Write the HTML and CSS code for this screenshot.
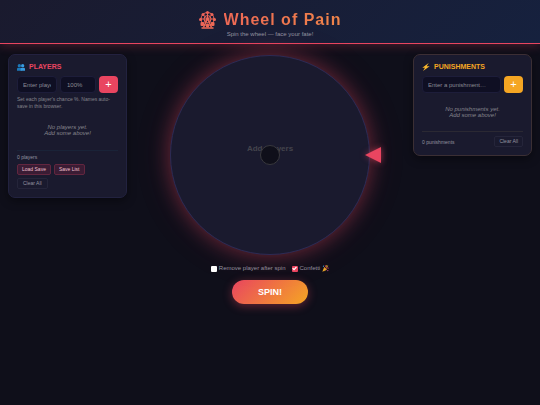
FILE: index.html
```html
<!DOCTYPE html>
<html lang="en">

<head>
	<meta charset="utf-8">
	<meta name="viewport" content="width=device-width, initial-scale=1">
	<title>Wheel of Pain</title>
	<link rel="stylesheet" href="styles.css">
</head>

<body>
	<header class="header">
		<h1>
			<svg class="logo" viewBox="0 0 34 36" aria-hidden="true">
				<defs>
					<linearGradient id="logofill" x1="0" y1="0" x2="34" y2="36" gradientUnits="userSpaceOnUse">
						<stop offset="0" stop-color="#ec5f5a" />
						<stop offset="1" stop-color="#ee6c54" />
					</linearGradient>
				</defs>
				<g fill="none" stroke="url(#logofill)" stroke-width="2">
					<circle cx="17" cy="16" r="13" />
					<circle cx="17" cy="16" r="7" />
					<path d="M17 3v13M4 16h26M8 7l18 18M26 7L8 25" />
					<path d="M16 17l-7 16M18 17l7 16" stroke-width="3" />
					<path d="M5 34h24" stroke-width="3" />
				</g>
				<g fill="url(#logofill)">
					<circle cx="17" cy="16" r="3" />
					<circle cx="17" cy="3" r="3" />
					<circle cx="8" cy="7" r="3" />
					<circle cx="26" cy="7" r="3" />
					<circle cx="3" cy="17" r="3" />
					<circle cx="31" cy="17" r="3" />
					<rect x="3" y="22" width="7" height="8" rx="2" />
					<rect x="24" y="22" width="7" height="8" rx="2" />
					<rect x="14" y="25" width="6" height="8" rx="2" />
				</g>
			</svg>
			<span class="title">Wheel of Pain</span>
		</h1>
		<p class="subtitle">Spin the wheel — face your fate!</p>
	</header>

	<main class="layout">
		<section class="panel">
			<h2 class="panel-title">
				<svg class="icon" viewBox="0 0 24 24" aria-hidden="true">
					<g fill="#1c78b8">
						<circle cx="7" cy="8" r="5" />
						<path d="M0 23v-5q0-4 4-4h6q4 0 4 4v5z" />
					</g>
					<g fill="#379be0">
						<circle cx="17" cy="8" r="5" />
						<path d="M11 23v-5q0-4 4-4h5q4 0 4 4v5z" />
					</g>
				</svg>
				Players
			</h2>
			<form class="add-row" onsubmit="return false;">
				<input type="text" class="field" placeholder="Enter player name…" aria-label="Player name">
				<input type="text" class="field field-chance" placeholder="100%" aria-label="Chance">
				<button class="btn-add" aria-label="Add player">+</button>
			</form>
			<p class="hint">Set each player's chance %. Names auto-save in this browser.</p>
			<p class="empty">No players yet.<br>Add some above!</p>
			<div class="panel-footer footer-stacked">
				<span class="count">0 players</span>
				<div class="actions">
					<button class="btn-small btn-save">Load Save</button>
					<button class="btn-small btn-save">Save List</button>
					<button class="btn-small">Clear All</button>
				</div>
			</div>
		</section>

		<section class="wheel-section">
			<div class="wheel">
				<span class="wheel-text">Add Players</span>
				<span class="wheel-hub"></span>
				<span class="pointer"></span>
			</div>
			<div class="options">
				<label><input type="checkbox">Remove player after spin</label>
				<label><input type="checkbox" checked>Confetti
					<svg class="icon-party" viewBox="0 0 24 24" aria-hidden="true">
						<path d="M1 23L8 7l9 9z" fill="#f5b52b" />
						<path d="M4 16l5 4M6 11l8 7" stroke="#c77a22" stroke-width="2" />
						<path d="M10 8q4-3 1-7M15 13q4-5 8-2" fill="none" stroke="#e94560" stroke-width="3" />
						<path d="M13 10l8-8" stroke="#e9a13a" stroke-width="3" />
						<circle cx="5" cy="4" r="2" fill="#4aa8e0" />
						<circle cx="20" cy="19" r="2" fill="#d65a9a" />
						<circle cx="16" cy="3" r="2" fill="#f5d02b" />
					</svg>
				</label>
			</div>
			<button class="btn-spin">SPIN!</button>
		</section>

		<section class="panel panel-punish">
			<h2 class="panel-title">
				<svg class="icon" viewBox="0 0 24 24" aria-hidden="true">
					<path d="M20 0L1 14h8L3 24l20-14h-9z" fill="#fcb92c" />
				</svg>
				Punishments
			</h2>
			<form class="add-row" onsubmit="return false;">
				<input type="text" class="field" placeholder="Enter a punishment…" aria-label="Punishment">
				<button class="btn-add" aria-label="Add punishment">+</button>
			</form>
			<p class="empty">No punishments yet.<br>Add some above!</p>
			<div class="panel-footer">
				<span class="count">0 punishments</span>
				<button class="btn-small">Clear All</button>
			</div>
		</section>
	</main>
</body>

</html>
```

FILE: styles.css
```css
* {
	box-sizing: border-box;
	margin: 0;
	padding: 0;
}

body {
	min-height: 100vh;
	background: #0f0f1a;
	color: #eaeaea;
	font-family: "Liberation Sans", Arial, sans-serif;
	font-size: 6px;
}

button,
input {
	font-family: inherit;
}

button {
	cursor: pointer;
}

/* Header */

.header {
	position: relative;
	padding: 10px 8px 5px;
	text-align: center;
	background: linear-gradient(135deg, #1a1a2e, #16213e);
	border-bottom: 1px solid #e94560;
	box-shadow: 0 1px 10px rgba(233, 69, 96, 0.3);
}

.header h1 {
	display: flex;
	justify-content: center;
	align-items: center;
	gap: 8px;
	font-size: 16px;
	line-height: 20px;
}

.logo {
	width: 17px;
	height: 18px;
}

.title {
	letter-spacing: 1px;
	background: linear-gradient(90deg, #ee6855, #ef8449);
	-webkit-background-clip: text;
	background-clip: text;
	color: transparent;
}

.subtitle {
	font-size: 6px;
	line-height: 8px;
	color: #9494a0;
}

/* Layout */

.layout {
	display: grid;
	grid-template-columns: 119px minmax(0, 1fr) 119px;
	align-items: start;
	padding: 10px 8px;
}

/* Panels */

.panel {
	padding: 8px;
	background: #1a1a2e;
	border: 1px solid #22223f;
	border-radius: 7px;
	box-shadow: 0 3px 10px rgba(0, 0, 0, 0.4);
}

.panel-punish {
	border-color: #3b2f34;
}

.panel-title {
	display: flex;
	align-items: center;
	gap: 4px;
	margin-bottom: 5px;
	font-size: 7px;
	line-height: 8px;
	text-transform: uppercase;
	color: #e94560;
}

.panel-punish .panel-title {
	color: #f5a623;
}

.icon {
	width: 8px;
	height: 8px;
}

.add-row {
	display: flex;
	gap: 3px;
}

.field {
	flex: 1;
	min-width: 0;
	height: 17px;
	padding: 0 5px;
	font-size: 6px;
	color: #eaeaea;
	background: #0f0f23;
	border: 1px solid #1d1d3a;
	border-radius: 4px;
	outline: none;
}

.field::placeholder {
	color: #8c8c94;
}

.field-chance {
	flex: 0 0 36px;
	padding-left: 6px;
}

.btn-add {
	flex: 0 0 19px;
	height: 17px;
	font-size: 11px;
	line-height: 17px;
	color: #fff;
	background: #e94560;
	border: none;
	border-radius: 4px;
}

.panel-punish .btn-add {
	background: #f5a623;
}

.hint {
	margin-top: 3px;
	font-size: 5px;
	line-height: 7px;
	color: #85858d;
}

.empty {
	padding: 14px 0;
	font-size: 6px;
	line-height: 6px;
	font-style: italic;
	text-align: center;
	color: #85858d;
}

.panel-punish .empty {
	padding: 13px 0;
}

.panel-footer {
	display: flex;
	justify-content: space-between;
	align-items: center;
	gap: 4px;
	padding-top: 4px;
	border-top: 1px solid #2b2933;
}

.footer-stacked {
	flex-direction: column;
	align-items: flex-start;
	padding-top: 3px;
	border-top-color: #1a2338;
}

.count {
	font-size: 5px;
	line-height: 6px;
	color: #9494a0;
}

.actions {
	display: flex;
	flex-wrap: wrap;
	gap: 3px;
}

.btn-small {
	height: 11px;
	padding: 0 5px;
	font-size: 5px;
	line-height: 9px;
	color: #9494a0;
	background: transparent;
	border: 1px solid #25253a;
	border-radius: 2px;
}

.panel-punish .btn-small {
	padding: 0 4px;
}

.btn-save {
	padding: 0 4px;
	color: #f0c0d0;
	background: #3a1c34;
	border-color: #62263f;
}

/* Wheel */

.wheel-section {
	display: flex;
	flex-direction: column;
	align-items: center;
	padding-top: 1px;
}

.wheel {
	position: relative;
	width: 200px;
	max-width: 100%;
	aspect-ratio: 1;
	background: #1a1a2e;
	border: 1px solid #2c2b55;
	border-radius: 50%;
	box-shadow: 0 0 20px rgba(233, 69, 96, 0.4), 0 0 40px rgba(233, 69, 96, 0.1);
}

.wheel-text {
	position: absolute;
	top: 88px;
	left: 0;
	right: 0;
	font-size: 8px;
	line-height: 10px;
	font-weight: bold;
	text-align: center;
	color: #44444c;
}

.wheel-hub {
	position: absolute;
	inset: 0;
	margin: auto;
	width: 20px;
	height: 20px;
	background: #0f0f1a;
	border: 1px solid #38383d;
	border-radius: 50%;
}

.pointer {
	position: absolute;
	top: calc(50% - 8px);
	right: -12px;
	border: solid transparent;
	border-width: 8px 16px 8px 0;
	border-right-color: #e94560;
	filter: drop-shadow(0 0 3px rgba(233, 69, 96, 0.6));
}

.options {
	display: flex;
	gap: 6px;
	margin-top: 10px;
	font-size: 6px;
	line-height: 7px;
	color: #9494a0;
}

.options label {
	display: flex;
	align-items: center;
	gap: 2px;
}

.options input {
	-webkit-appearance: none;
	appearance: none;
	width: 6px;
	height: 6px;
	background: #fff;
	border-radius: 1px;
}

.options input:checked {
	background: #e94560;
}

.options input:checked::before {
	content: "";
	display: block;
	width: 6px;
	height: 6px;
	background: #fff;
	clip-path: polygon(12% 52%, 26% 38%, 42% 56%, 76% 18%, 90% 32%, 42% 84%);
}

.icon-party {
	width: 7px;
	height: 7px;
}

.btn-spin {
	height: 24px;
	margin-top: 8px;
	padding: 0 26px;
	font-size: 9px;
	font-weight: bold;
	color: #fff;
	background: linear-gradient(135deg, #e94560, #f5a623);
	border: none;
	border-radius: 12px;
	box-shadow: 0 2px 10px rgba(233, 69, 96, 0.4);
}
```
